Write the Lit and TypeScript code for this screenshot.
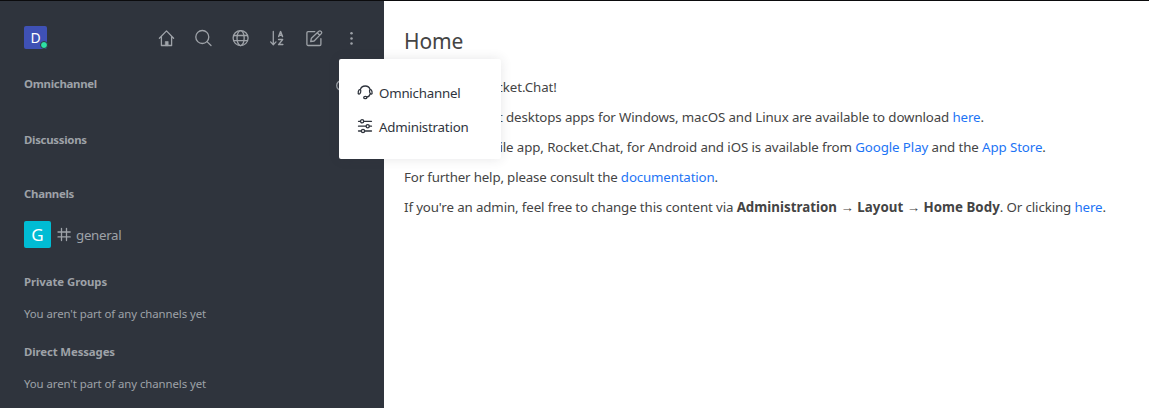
import { LitElement, html, css, svg } from "lit";
import { customElement, property } from "lit/decorators.js";

const toolbarIcons = [
  // home
  svg`<path d="M11.400 12.200 18.500 4.900l7.100 7.300M13.400 10.600V19.500h10.200V10.600"/><path d="M17.300 19.300v-3.800h2.900v3.800z" fill="currentColor" stroke-width="0.600"/>`,
  // search
  svg`<circle cx="17.300" cy="11" r="6.500"/><path d="m22 15.600 4 3.900"/>`,
  // globe
  svg`<circle cx="18.600" cy="12.100" r="7.500"/><ellipse cx="18.600" cy="12.100" rx="3.600" ry="7.500"/><path d="M12 9.500h13.300M12 14.700h13.300"/>`,
  // sort
  svg`<path d="M14.300 5.500v13M11.600 15.900l2.700 2.800 2.700-2.800"/><path d="M19.700 10.600l1.900-5 1.900 5M20.300 9.200h2.600M19.600 13.600h4l-4 5h4.200" stroke-width="1.500"/>`,
  // compose
  svg`<path d="M18.800 5.600h-6.700a1.200 1.200 0 0 0-1.200 1.200v11.500a1.200 1.200 0 0 0 1.200 1.200h11.600a1.200 1.200 0 0 0 1.200-1.200v-5.600"/><path d="m14.700 15.700.7-3.500 7.400-7a1.400 1.400 0 0 1 2 0l.5.400a1.400 1.400 0 0 1 0 2l-7.200 7.400zM21.300 6.800l2.400 2.400"/>`,
  // kebab
  svg`<g fill="currentColor" stroke="none"><circle cx="18.500" cy="7.300" r="1.250"/><circle cx="18.500" cy="12.500" r="1.250"/><circle cx="18.500" cy="17.500" r="1.250"/></g>`,
];

@customElement("room-section")
class RoomSection extends LitElement {
  @property() label = "";
  @property() empty = "";
  static styles = css`
    :host { display: block; color: #9ea2a8; }
    .label { font-size: 11.400px; font-weight: 700; line-height: 20px; letter-spacing: var(--label-spacing, -0.280px); }
    .empty { font-size: 11.400px; line-height: 20px; margin-top: 12px; letter-spacing: -0.080px; }
  `;
  render() {
    return html`
      <div class="label"><span>${this.label}</span></div>
      ${this.empty ? html`<div class="empty"><span>${this.empty}</span></div>` : ""}
      <slot></slot>
    `;
  }
}

@customElement("app-root")
class AppRoot extends LitElement {
  static styles = css`
    :host {
      display: block;
      box-sizing: border-box;
      height: 408px;
      border-top: 1px solid #0b0b0d;
      overflow: hidden;
      position: relative;
      background: #fff;
      color: #444;
      font-family: "Noto Sans", "Open Sans", sans-serif;
      font-size: 13.300px;
    }
    .shell { display: grid; grid-template-columns: 384px 1fr; height: 407px; }
    .sidebar { background: #2f343d; color: #9ea2a8; overflow: hidden; }
    .toolbar { display: flex; height: 73px; padding: 25px 14px 0 24px; box-sizing: border-box; }
    .me {
      position: relative; width: 23px; height: 23px; border-radius: 2px;
      background: #3f51b5; color: #fff; font-size: 14px; line-height: 24px; text-align: center;
    }
    .status {
      position: absolute; right: -1px; bottom: 0; width: 6px; height: 6px;
      border: 1px solid #2f343d; border-radius: 50%; background: #2de0a5;
    }
    .tools { display: flex; margin-left: auto; }
    .tools svg { width: 37px; height: 24px; }
    svg { fill: none; stroke: currentColor; stroke-width: 1.300; stroke-linecap: round; stroke-linejoin: round; display: block; }
    .sections { padding-left: 24px; display: flex; flex-direction: column; }
    .omni { display: flex; justify-content: space-between; padding-right: 32px; height: 56px; }
    .omni svg { width: 16px; height: 20px; margin-top: 2px; }
    .discussions { height: 54px; }
    .channels { height: 88px; }
    .private { height: 70px; --label-spacing: -0.080px; }
    .direct { --label-spacing: -0.120px; }
    .room { display: flex; align-items: center; height: 27px; margin-top: 17px; }
    .avatar { width: 27px; height: 27px; border-radius: 2px; background: #00bcd4; color: #fff; font-size: 17px; line-height: 28px; text-align: center; }
    .room svg { width: 16px; height: 16px; margin: 0 4px 0 5px; }
    .name { font-size: 13.300px; letter-spacing: -0.300px; line-height: 20px; }
    .content { padding: 25px 0 0 20px; white-space: nowrap; }
    h1 { margin: 0 0 21px; font-size: 21px; font-weight: 400; line-height: 30px; letter-spacing: -0.150px; }
    p { margin: 0 0 10px; line-height: 20px; letter-spacing: -0.120px; }
    .welcome { letter-spacing: -0.080px; }
    .mobile { letter-spacing: -0.100px; }
    .help { letter-spacing: -0.160px; }
    b { letter-spacing: 0.030px; }
    a { color: #1d74f5; text-decoration: none; }
    .menu {
      position: absolute; left: 339px; top: 58px; width: 162px; height: 100px;
      box-sizing: border-box; padding: 17px 16px; border-radius: 2px; background: #fff; color: #2f343d;
      box-shadow: 0 0 12px rgba(47, 52, 61, 0.12);
    }
    .item { display: flex; align-items: center; height: 34px; gap: 4px; line-height: 20px; letter-spacing: -0.220px; }
    .item svg { width: 20px; height: 20px; }
  `;

  render() {
    return html`
      <div class="shell">
        <aside class="sidebar">
          <div class="toolbar">
            <div class="me">D<span class="status"></span></div>
            <div class="tools">
              ${toolbarIcons.map((icon) => html`<svg viewBox="0 0 37 24">${icon}</svg>`)}
            </div>
          </div>
          <div class="sections">
            <div class="omni">
              <room-section label="Omnichannel"></room-section>
              <svg viewBox="0 0 16 20"><circle cx="5.700" cy="9.500" r="5"/></svg>
            </div>
            <room-section class="discussions" label="Discussions"></room-section>
            <room-section class="channels" label="Channels">
              <div class="room">
                <div class="avatar">G</div>
                <svg viewBox="0 0 16 16"><path d="M5.500 1.300v12.200M10.500 1.300v12.200M2 5h12.200M2 9.900h12.200"/></svg>
                <span class="name">general</span>
              </div>
            </room-section>
            <room-section class="private" label="Private Groups" empty="You aren't part of any channels yet"></room-section>
            <room-section class="direct" label="Direct Messages" empty="You aren't part of any channels yet"></room-section>
          </div>
        </aside>
        <main class="content">
          <h1><span>Home</span></h1>
          <p class="welcome">Welcome to Rocket.Chat!</p>
          <p>The Rocket.Chat desktops apps for Windows, macOS and Linux are available to download <a>here</a>.</p>
          <p class="mobile">The native mobile app, Rocket.Chat, for Android and iOS is available from <a>Google Play</a> and the <a>App Store</a>.</p>
          <p class="help">For further help, please consult the <a>documentation</a>.</p>
          <p>If you're an admin, feel free to change this content via <b>Administration → Layout → Home Body</b>. Or clicking <a>here</a>.</p>
        </main>
      </div>
      <div class="menu">
        <div class="item">
          <svg viewBox="0 0 20 20"><path d="M5.300 6.600a5.200 5.200 0 0 1 9.900 0M15.200 11c-.4 1.500-1.500 2.700-3.400 3.200"/><ellipse cx="4.500" cy="8.800" rx="1.200" ry="2.300" transform="rotate(14 4.500 8.800)"/><ellipse cx="15.800" cy="8.800" rx="1.200" ry="2.300" transform="rotate(-14 15.800 8.800)"/><ellipse cx="10.300" cy="14.500" rx="1.600" ry="1.200"/></svg>
          <span>Omnichannel</span>
        </div>
        <div class="item">
          <svg viewBox="0 0 20 20"><path d="M3.500 4.300h1.900M8.700 4.300h7.800M3.500 9.200h7.500M14.400 9.200h2.100M3.500 14h2.800M9.700 14h6.800"/><circle cx="7.100" cy="4.300" r="1.600"/><circle cx="12.700" cy="9.200" r="1.600"/><circle cx="8" cy="14" r="1.600"/></svg>
          <span>Administration</span>
        </div>
      </div>
    `;
  }
}
